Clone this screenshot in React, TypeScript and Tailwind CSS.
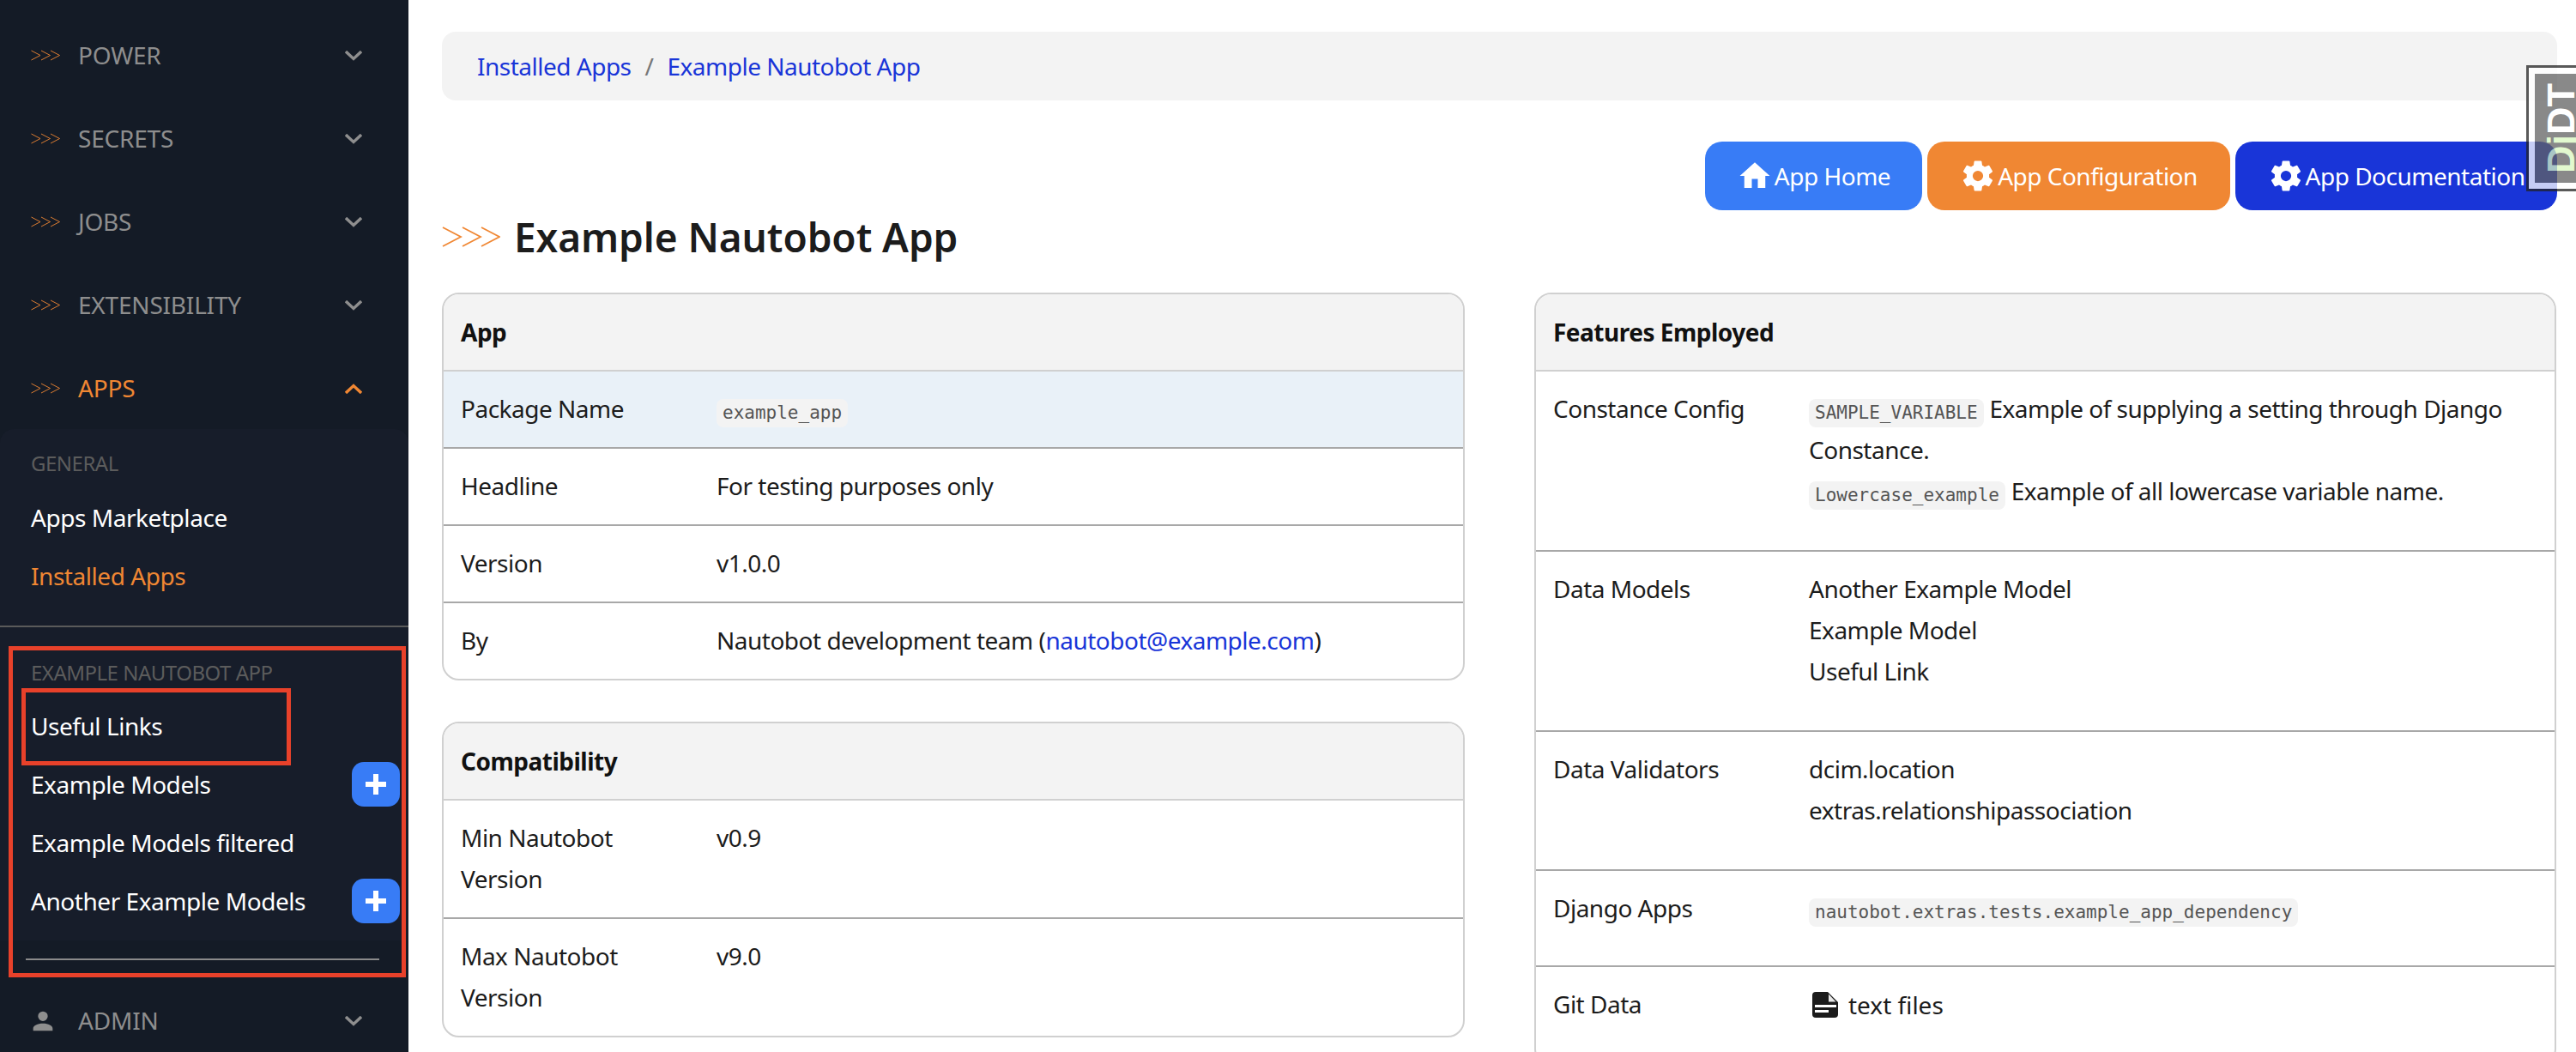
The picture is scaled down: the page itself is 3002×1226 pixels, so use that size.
const FONT = "font-['Noto_Sans',sans-serif]";

const mdiHome = "M10,20V14H14V20H19V12H22L12,3L2,12H5V20H10Z";
const mdiCog =
  "M12,15.5A3.5,3.5 0 0,1 8.5,12A3.5,3.5 0 0,1 12,8.5A3.5,3.5 0 0,1 15.5,12A3.5,3.5 0 0,1 12,15.5M19.43,12.97C19.47,12.65 19.5,12.33 19.5,12C19.5,11.67 19.47,11.34 19.43,11L21.54,9.37C21.73,9.22 21.78,8.95 21.66,8.73L19.66,5.27C19.54,5.05 19.27,4.96 19.05,5.05L16.56,6.05C16.04,5.66 15.5,5.32 14.87,5.07L14.5,2.42C14.46,2.18 14.25,2 14,2H10C9.75,2 9.54,2.18 9.5,2.42L9.13,5.07C8.5,5.32 7.96,5.66 7.44,6.05L4.95,5.05C4.73,4.96 4.46,5.05 4.34,5.27L2.34,8.73C2.21,8.95 2.27,9.22 2.46,9.37L4.57,11C4.53,11.34 4.5,11.67 4.5,12C4.5,12.33 4.53,12.65 4.57,12.97L2.46,14.63C2.27,14.78 2.21,15.05 2.34,15.27L4.34,18.73C4.46,18.95 4.73,19.03 4.95,18.95L7.44,17.94C7.96,18.34 8.5,18.68 9.13,18.93L9.5,21.58C9.54,21.82 9.75,22 10,22H14C14.25,22 14.46,21.82 14.5,21.58L14.87,18.93C15.5,18.67 16.04,18.34 16.56,17.94L19.05,18.95C19.27,19.03 19.54,18.95 19.66,18.73L21.66,15.27C21.78,15.05 21.73,14.78 21.54,14.63L19.43,12.97Z";
const mdiAccount =
  "M12,4A4,4 0 0,1 16,8A4,4 0 0,1 12,12A4,4 0 0,1 8,8A4,4 0 0,1 12,4M12,14C16.42,14 20,15.79 20,18V20H4V18C4,15.79 7.58,14 12,14Z";
const mdiPlus = "M20 14H14V20H10V14H4V10H10V4H14V10H20V14Z";

function Mdi({ d, className }: { d: string; className: string }) {
  return (
    <svg viewBox="0 0 24 24" className={className} fill="currentColor">
      <path d={d} />
    </svg>
  );
}

function FileIcon() {
  return (
    <svg viewBox="0 0 30 30" className="w-[30px] h-[30px] shrink-0">
      <path d="M4 0H18L30 12V26A4 4 0 0 1 26 30H4A4 4 0 0 1 0 26V4A4 4 0 0 1 4 0Z" fill="#1c1c1c" />
      <path d="M19 2.5L27.5 11.5H19Z" fill="#e8e8e8" />
      <rect x="3" y="15" width="25" height="3" fill="#fff" />
      <rect x="3" y="21" width="16" height="3" fill="#fff" />
    </svg>
  );
}

function Arrows({ className }: { className: string }) {
  return (
    <svg viewBox="0 0 34 12" className={className} fill="none" stroke="#f08733" strokeWidth="0.9">
      <path d="M0.5 0.5 L11 6 L0.5 11.5" />
      <path d="M12 0.5 L22.5 6 L12 11.5" />
      <path d="M23 0.5 L33.5 6 L23 11.5" />
    </svg>
  );
}

function Chevron({ up }: { up?: boolean }) {
  return (
    <svg viewBox="0 0 20 12" className="w-[20px] h-[12px]" fill="none" stroke="currentColor" strokeWidth="3.4">
      <path d={up ? "M1 11 L10 2.5 L19 11" : "M1 1 L10 9.5 L19 1"} />
    </svg>
  );
}

function NavGroup({ label, active, icon }: { label: string; active?: boolean; icon?: boolean }) {
  return (
    <div className={`h-[97px] flex items-center pl-[36px] pr-[54px] ${active ? "text-[#f08733]" : "text-[#8e8e8e]"}`}>
      <div className="w-[55px] flex items-center">
        {icon ? <Mdi d={mdiAccount} className="w-[34px] h-[34px] text-[#8e8e8e] -ml-[3px]" /> : <Arrows className="w-[34px] h-[13px]" />}
      </div>
      <span className="flex-1 -mt-[2px] text-[28px] tracking-[-0.2px]">{label}</span>
      <Chevron up={active} />
    </div>
  );
}

function NavItem({ label, active, add }: { label: string; active?: boolean; add?: boolean }) {
  return (
    <div className={`h-[68px] flex items-center justify-between pl-[36px] pr-[10px] text-[28px] tracking-[-0.45px] ${active ? "text-[#f08733]" : "text-white"}`}>
      <span>{label}</span>
      {add && (
        <span className="w-[56px] h-[52px] rounded-[14px] bg-[#387cf6] text-white flex items-center justify-center">
          <Mdi d={mdiPlus} className="w-[36px] h-[36px]" />
        </span>
      )}
    </div>
  );
}

function Sidebar() {
  return (
    <aside className="relative w-[476px] shrink-0 h-full bg-[#141b26] pt-[16px]">
      {["POWER", "SECRETS", "JOBS", "EXTENSIBILITY"].map((g) => (
        <NavGroup key={g} label={g} />
      ))}
      <NavGroup label="APPS" active />
      <div className="-mt-[1px] rounded-t-[16px] bg-[#171d2a] pb-[12px]">
        <div className="h-[69px] pl-[36px] flex items-end pb-[17px] text-[24px] leading-none text-[#5c5c5c]">GENERAL</div>
        <NavItem label="Apps Marketplace" />
        <NavItem label="Installed Apps" active />
        <div className="mt-[24px] h-[2px] bg-[#5a5a5a]" />
        <div className="mt-[24px] h-[57px] pl-[36px] flex items-center text-[24px] text-[#5c5c5c]">EXAMPLE NAUTOBOT APP</div>
        <NavItem label="Useful Links" />
        <NavItem label="Example Models" add />
        <NavItem label="Example Models filtered" />
        <NavItem label="Another Example Models" add />
      </div>
      <div className="mt-[21px] ml-[30px] w-[412px] h-[2px] bg-[#8a8a8a]" />
      <div className="mt-[22px]">
        <NavGroup label="ADMIN" icon />
      </div>
      {/* annotation boxes */}
      <div className="absolute left-[10px] top-[753px] w-[463px] h-[386px] border-[5px] border-[#e8412a]" />
      <div className="absolute left-[25px] top-[802px] w-[314px] h-[90px] border-[5px] border-[#e8412a]" />
    </aside>
  );
}

function Code({ children }: { children: string }) {
  return (
    <code className="inline-block h-[33px] leading-[33px] align-[-1px] px-[7px] rounded-[8px] bg-[#f3f3f3] text-[#555] tracking-normal text-[21px] font-['DejaVu_Sans_Mono',monospace]">
      {children}
    </code>
  );
}

function Card({ title, children, className }: { title: string; children: React.ReactNode; className?: string }) {
  return (
    <div className={`border-2 border-[#d0d0d0] rounded-[20px] overflow-hidden ${className ?? ""}`}>
      <div className="h-[90px] px-[20px] flex items-center bg-[#f3f3f3] border-b-2 border-[#d0d0d0] font-bold text-[#111]">{title}</div>
      {children}
    </div>
  );
}

function Row({ label, children, tint, last }: { label: string; children: React.ReactNode; tint?: boolean; last?: boolean }) {
  return (
    <div className={`flex px-[20px] pt-[19px] pb-[21px] ${last ? "" : "border-b-2 border-[#a8a8a8]"} ${tint ? "bg-[#e9f1f8]" : ""}`}>
      <div className="w-[298px] shrink-0 pr-[20px]">{label}</div>
      <div className="flex-1 min-w-0">{children}</div>
    </div>
  );
}

function Btn({ color, icon, label, w }: { color: string; icon: string; label: string; w: string }) {
  return (
    <span className={`${color} ${w} h-[80px] rounded-[20px] text-white flex items-center justify-center gap-[2px] text-[28px]`}>
      <Mdi d={icon} className="w-[42px] h-[42px]" />
      {label}
    </span>
  );
}

export default function App() {
  return (
    <div className={`relative flex w-[3002px] h-[1226px] overflow-hidden bg-white text-[28px] leading-[48px] tracking-[-0.5px] text-[#1c1c1c] ${FONT}`}>
      <Sidebar />
      <main className="flex-1 min-w-0 pl-[39px] pr-[22px] pt-[37px]">
        <nav className="h-[80px] px-[41px] flex items-center gap-[16px] rounded-[16px] bg-[#f3f3f3]">
          <span className="text-[#1935d8]">Installed Apps</span>
          <span className="text-[#777]">/</span>
          <span className="text-[#1935d8]">Example Nautobot App</span>
        </nav>
        <div className="mt-[48px] flex justify-end gap-[6px]">
          <Btn color="bg-[#387cf6]" icon={mdiHome} label="App Home" w="w-[253px]" />
          <Btn color="bg-[#f08733]" icon={mdiCog} label="App Configuration" w="w-[353px]" />
          <Btn color="bg-[#1935d8]" icon={mdiCog} label="App Documentation" w="w-[375px]" />
        </div>
        <h1 className="mt-[-2px] flex items-center gap-[16px] h-[66px] text-[46px] font-semibold tracking-[-0.1px] text-[#1c1c1c]">
          <Arrows className="w-[68px] h-[24px]" />
          Example Nautobot App
        </h1>
        <div className="mt-[32px] grid grid-cols-[1192px_1191px] gap-[81px] items-start">
          <div className="flex flex-col gap-[48px]">
            <Card title="App">
              <Row label="Package Name" tint>
                <Code>example_app</Code>
              </Row>
              <Row label="Headline">For testing purposes only</Row>
              <Row label="Version">v1.0.0</Row>
              <Row label="By" last>
                Nautobot development team (<span className="text-[#1935d8]">nautobot@example.com</span>)
              </Row>
            </Card>
            <Card title="Compatibility">
              <Row label="Min Nautobot Version">v0.9</Row>
              <Row label="Max Nautobot Version" last>
                v9.0
              </Row>
            </Card>
          </div>
          <Card title="Features Employed">
            <Row label="Constance Config">
              <div className="mb-[24px]">
                <div>
                  <Code>SAMPLE_VARIABLE</Code> Example of supplying a setting through Django Constance.
                </div>
                <div>
                  <Code>Lowercase_example</Code> Example of all lowercase variable name.
                </div>
              </div>
            </Row>
            <Row label="Data Models">
              <div className="mb-[24px]">
                <div>Another Example Model</div>
                <div>Example Model</div>
                <div>Useful Link</div>
              </div>
            </Row>
            <Row label="Data Validators">
              <div className="mb-[24px]">
                <div>dcim.location</div>
                <div>extras.relationshipassociation</div>
              </div>
            </Row>
            <Row label="Django Apps">
              <div className="mb-[22px]">
                <Code>nautobot.extras.tests.example_app_dependency</Code>
              </div>
            </Row>
            <Row label="Git Data" last>
              <div className="mb-[24px] flex items-center gap-[12px] pl-[4px] tracking-[0px] pt-[1px]">
                <FileIcon />
                text files
              </div>
            </Row>
          </Card>
        </div>
      </main>
      {/* debug toolbar handle */}
      <div className="absolute right-0 top-[76px] w-[58px] h-[147px] border-[3px] border-r-0 border-[#222] bg-white opacity-75 pl-[7px] py-[7px] overflow-hidden">
        <div className="relative h-full bg-[#626262] overflow-hidden">
          <span className="absolute left-[53px] bottom-[11px] origin-bottom-left -rotate-90 whitespace-nowrap text-[45px] leading-[45px] tracking-normal font-bold font-['Liberation_Sans',sans-serif] text-white">
            <span className="text-[#d9f7c0]">Dj</span>DT
          </span>
        </div>
      </div>
    </div>
  );
}
